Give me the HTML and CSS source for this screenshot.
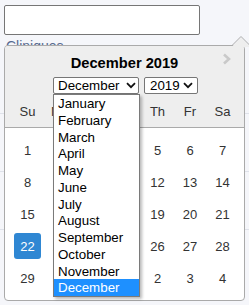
FILE: index.html
```html
<!DOCTYPE html>
<html lang="fr">
<head>
<meta charset="utf-8">
<link rel="stylesheet" href="styles.css">
</head>
<body>
<div class="page">
  <input class="search" type="text">
  <a class="label" href="#">Cliniques</a>
  <div class="bg-rows">
    <div class="bg-row"></div>
    <div class="bg-row"></div>
    <div class="bg-row"></div>
  </div>

  <div class="datepicker">
    <div class="dp-head">
      <div class="dp-title-row">
        <span></span>
        <span class="dp-title">December 2019</span>
        <svg class="dp-next" width="9" height="12" viewBox="0 0 9 12"><polyline points="2,1.5 7,6 2,10.5" fill="none" stroke="#c9c9c9" stroke-width="2.6"/></svg>
      </div>
      <div class="dp-selects">
        <div class="sel sel-month"><span>December</span><svg class="chev" width="10" height="7" viewBox="0 0 10 7"><polyline points="1,1.2 5,5.2 9,1.2" fill="none" stroke="#111" stroke-width="1.8"/></svg></div>
        <div class="sel sel-year"><span>2019</span><svg class="chev" width="10" height="7" viewBox="0 0 10 7"><polyline points="1,1.2 5,5.2 9,1.2" fill="none" stroke="#111" stroke-width="1.8"/></svg></div>
      </div>
      <div class="dp-weekdays">
        <span>Su</span><span>Mo</span><span>Tu</span><span>We</span><span>Th</span><span>Fr</span><span>Sa</span>
      </div>
    </div>
    <div class="dp-days">
      <span>1</span><span>2</span><span>3</span><span>4</span><span>5</span><span>6</span><span>7</span>
      <span>8</span><span>9</span><span>10</span><span>11</span><span>12</span><span>13</span><span>14</span>
      <span>15</span><span>16</span><span>17</span><span>18</span><span>19</span><span>20</span><span>21</span>
      <span><b class="today">22</b></span><span>23</span><span>24</span><span>25</span><span>26</span><span>27</span><span>28</span>
      <span>29</span><span>30</span><span>31</span><span>1</span><span>2</span><span>3</span><span>4</span>
    </div>

    <svg class="caret" width="20" height="11" viewBox="0 0 20 11">
      <polygon points="0.5,11 10,1.5 19.5,11" fill="#eee"/>
      <polyline points="0.5,10 10,0.5 19.5,10" fill="none" stroke="#aaa" stroke-width="1"/>
    </svg>

    <ul class="month-list">
      <li>January</li>
      <li>February</li>
      <li>March</li>
      <li>April</li>
      <li>May</li>
      <li>June</li>
      <li>July</li>
      <li>August</li>
      <li>September</li>
      <li>October</li>
      <li>November</li>
      <li class="selected">December</li>
    </ul>
  </div>
</div>
</body>
</html>
```

FILE: styles.css
```css
html, body {
  margin: 0;
  padding: 0;
}

body {
  background: #f5f6fa;
  font-family: "Liberation Sans", Arial, sans-serif;
  color: #333;
}

.page {
  position: relative;
  width: 249px;
  height: 305px;
  box-sizing: border-box;
  padding: 5px 0 0 4px;
  overflow: hidden;
}

.search {
  display: block;
  width: 196px;
  height: 30px;
  box-sizing: border-box;
  margin: 0;
  padding: 0;
  border: 1px solid #767676;
  border-radius: 2px;
  background: #fff;
}

.label {
  display: block;
  margin-top: 3px;
  padding-left: 2px;
  font-size: 14px;
  line-height: 16px;
  color: #56698f;
  text-decoration: none;
}

.bg-rows {
  margin-left: -4px;
  margin-top: 2px;
}

.bg-row {
  height: 57px;
  border-bottom: 1px solid #dfe2ea;
}

/* ---------- datepicker ---------- */
.datepicker {
  position: absolute;
  left: 4px;
  top: 45px;
  width: 241px;
  height: 256px;
  box-sizing: border-box;
  border: 1px solid #aaa;
  border-radius: 4px;
  background: #fff;
}

.dp-head {
  background: #eee;
  border-bottom: 1px solid #aaa;
  border-radius: 3px 3px 0 0;
}

.dp-title-row {
  display: grid;
  grid-template-columns: 1fr auto 1fr;
  align-items: start;
  padding-top: 9px;
}

.dp-title {
  font-size: 14.67px;
  line-height: 17px;
  font-weight: bold;
  color: #000;
}

.dp-next {
  justify-self: end;
  margin-right: 13px;
  margin-top: -2px;
}

.dp-selects {
  display: flex;
  justify-content: center;
  gap: 5px;
  margin-top: 5px;
  padding-left: 2px;
}

.sel {
  display: flex;
  align-items: center;
  height: 17px;
  box-sizing: border-box;
  border: 1px solid #767676;
  border-radius: 2px;
  background: #fff;
  font-size: 13.33px;
  color: #000;
}

.sel-month {
  width: 86px;
  padding: 0 2px 0 4px;
}

.sel-year {
  width: 54px;
  padding: 0 4px 0 5px;
}

.sel .chev {
  margin-left: auto;
}

.dp-weekdays {
  display: grid;
  grid-template-columns: repeat(7, 32.5px);
  justify-content: center;
  height: 33px;
  box-sizing: border-box;
  padding: 1px 0 0 1px;
  align-items: center;
  font-size: 13px;
  color: #333;
}

.dp-weekdays span,
.dp-days span {
  text-align: center;
}

.dp-days {
  display: grid;
  grid-template-columns: repeat(7, 32.5px);
  grid-auto-rows: 32px;
  justify-content: center;
  padding: 6px 0 0 1px;
  font-size: 13px;
  color: #333;
}

.dp-days span {
  display: flex;
  align-items: center;
  justify-content: center;
}

.today {
  display: flex;
  align-items: center;
  justify-content: center;
  width: 27px;
  height: 26px;
  border-radius: 3px;
  background: #2f87d3;
  color: #fff;
  font-weight: normal;
}

.caret {
  position: absolute;
  left: 226px;
  top: -10px;
}

/* open native-looking dropdown list */
.month-list {
  position: absolute;
  left: 48px;
  top: 48px;
  width: 87px;
  box-sizing: border-box;
  margin: 0;
  padding: 0;
  list-style: none;
  background: #fff;
  border: 1px solid #7a7a7a;
  box-shadow: 2px 2px 3px rgba(0, 0, 0, 0.28);
  font-size: 13.33px;
  color: #000;
}

.month-list li {
  height: 16.75px;
  line-height: 16.75px;
  padding: 1px 0 0 4px;
  box-sizing: border-box;
}

.month-list .selected {
  background: #1e90ff;
  color: #fff;
}
```
